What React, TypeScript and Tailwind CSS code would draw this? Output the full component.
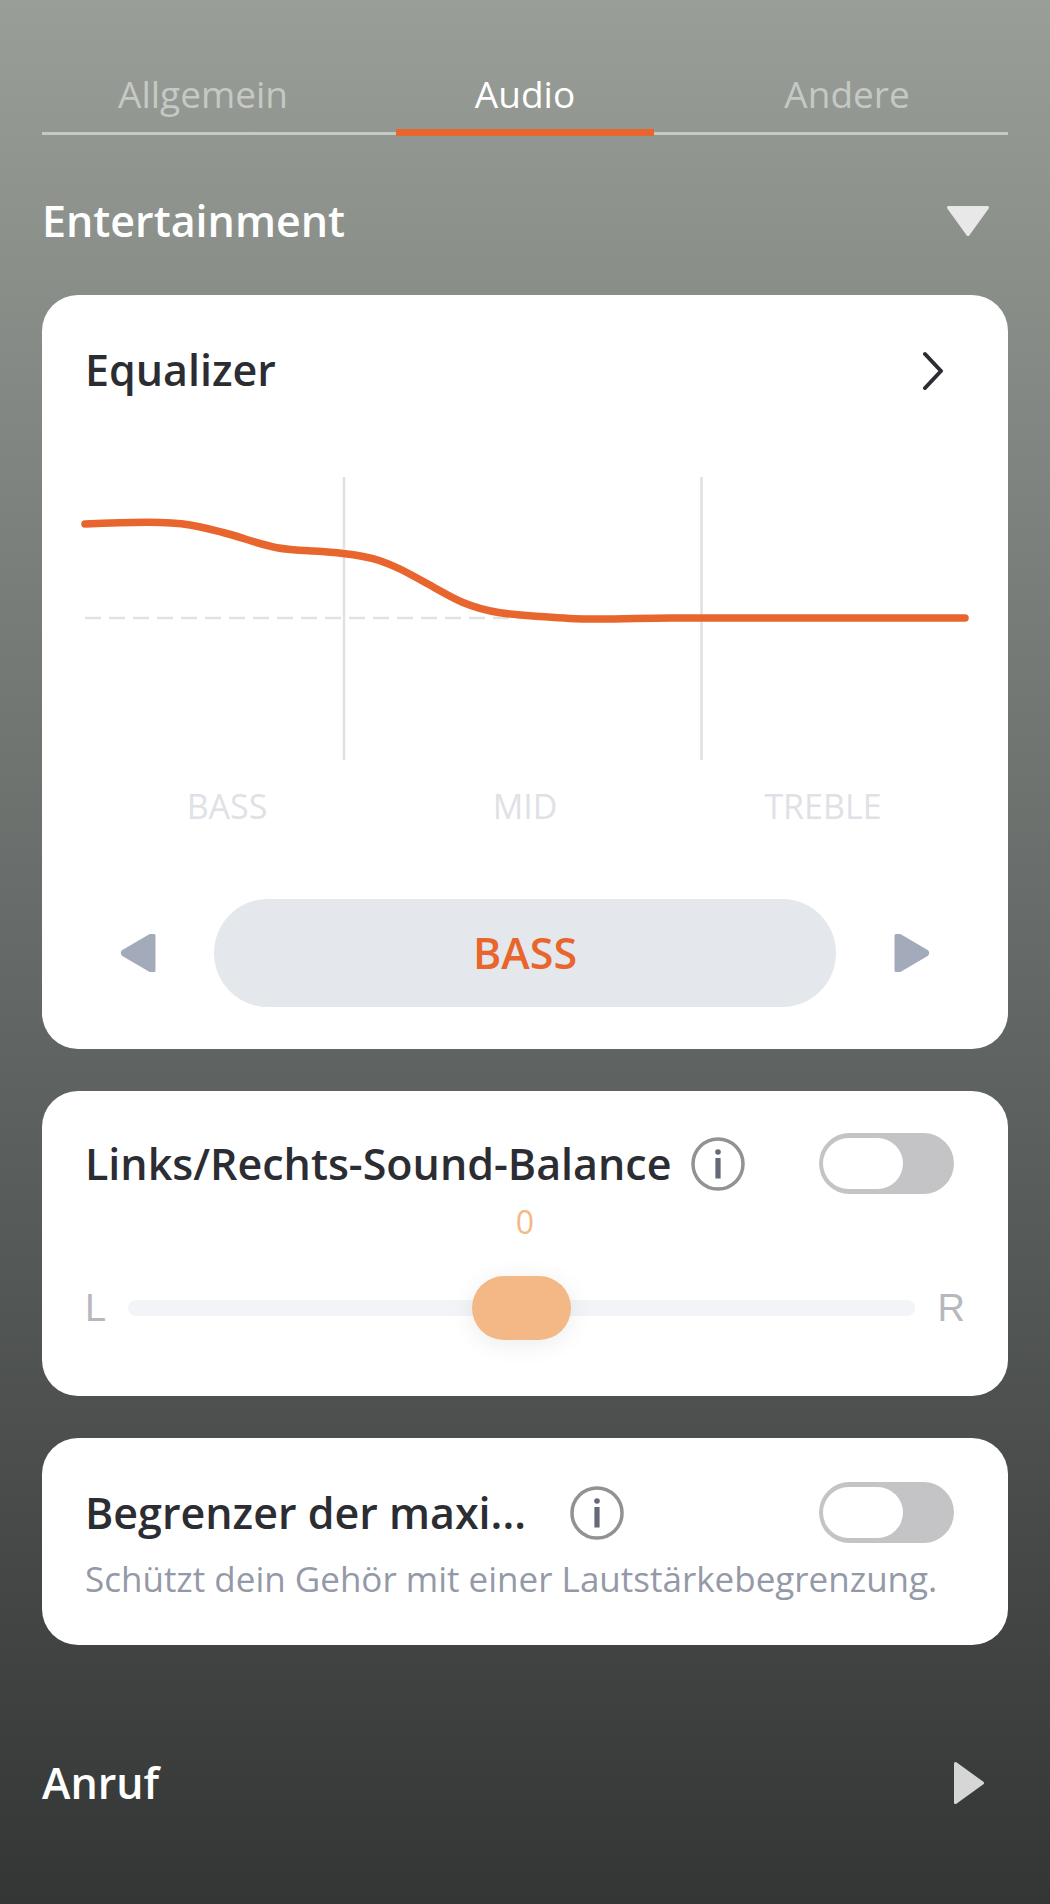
import { ReactNode, useState } from "react";

const tabs = ["Allgemein", "Audio", "Andere"];
const bands = ["BASS", "MID", "TREBLE"];
const presets = ["BASS", "MID", "TREBLE"];

const Triangle = ({ className, d, box }: { className: string; d: string; box: string }) => (
  <svg viewBox={box} className={className} fill="currentColor" stroke="currentColor" strokeWidth="3" strokeLinejoin="round" aria-hidden="true">
    <path d={d} />
  </svg>
);

const Card = ({ className, children }: { className: string; children: ReactNode }) => (
  <section className={`rounded-[36px] bg-white px-[43px] ${className}`}>{children}</section>
);

const InfoButton = ({ label }: { label: string }) => (
  <button type="button" aria-label={label} className="shrink-0">
    <svg viewBox="0 0 54 54" className="size-[54px]" aria-hidden="true">
      <circle cx="27" cy="27" r="25" fill="none" stroke="#929293" strokeWidth="3.5" />
      <circle cx="27" cy="15" r="2.8" fill="#646978" />
      <path d="M24.4 21h5.2v20.500h-5.200z" fill="#646978" />
    </svg>
  </button>
);

const Toggle = ({ id }: { id: string }) => (
  <input
    id={id}
    type="checkbox"
    role="switch"
    className="mr-[11px] ml-auto flex h-[61px] w-[135px] shrink-0 appearance-none items-center rounded-full bg-[#c4c4c6] px-1 before:h-[51px] before:w-20 before:rounded-full before:bg-white checked:justify-end checked:bg-[#e8662d]"
  />
);

const EqualizerChart = () => (
  <svg viewBox="0 0 880 283" className="mt-[77px] w-full overflow-visible" role="img" aria-label="Equalizer">
    <path d="M0 141H880" stroke="#e2e2e5" strokeWidth="2.500" strokeDasharray="16 8" />
    <path d="M259 0V283M616.500 0V283" stroke="#e0e0e5" strokeWidth="2.500" />
    <path
      d="M0 47C22 46 42 45.300 62 45.300C78 45.300 92 45.800 105 48C116 49.800 126 52.500 138 55.500C158 60.500 174 67.500 192 70.700C204 72.800 216 73.300 228 74C240 74.700 248 75.200 258 76.500C272 78 284 80.200 295 83.700C303 86.500 309 89 315 92C325 97 333 101.500 342 106.500C354 113 366 120.500 378 125.500C390 130.500 402 133.800 415 135.700C425 137.200 435 138 445 138.700C464 140 484 142 502 142C532 142.400 558 141 585 141H880"
      fill="none"
      stroke="#e8662d"
      strokeWidth="7.500"
      strokeLinecap="round"
    />
  </svg>
);

export default function App() {
  const [activeTab, setActiveTab] = useState("Audio");
  const [preset, setPreset] = useState(0);
  const [balance, setBalance] = useState(0);

  const step = (by: number) => setPreset((preset + by + presets.length) % presets.length);

  return (
    <main className="min-h-screen bg-linear-to-b from-[#999e98] via-[#656a68] to-[#343635] px-[42px] pt-[66px] font-['Open_Sans',sans-serif] text-[#2b2d33]">
      {/* Tabs */}
      <nav className="grid grid-cols-3 border-b-3 border-[#c5c9c4]">
        {tabs.map((tab) => (
          <button
            key={tab}
            type="button"
            onClick={() => setActiveTab(tab)}
            className={`relative pb-[10px] text-[37px] leading-[56px] ${
              tab === activeTab
                ? "text-white after:absolute after:inset-x-8 after:-bottom-1 after:h-[7px] after:bg-[#e8662d]"
                : "text-[#c5c9c4]"
            }`}
          >
            {tab}
          </button>
        ))}
      </nav>

      <button type="button" className="mt-14 flex w-full items-center justify-between pr-[18px] text-white">
        <span className="text-[43px] leading-[60px] font-semibold">Entertainment</span>
        <Triangle box="0 0 44 32" className="h-8 w-11 text-[#e8e8e8]" d="M2.500 2.500H41.500L22 29.500Z" />
      </button>

      {/* Equalizer */}
      <Card className="mt-11 pt-[45px] pb-[42px]">
        <a href="#equalizer" className="flex items-center justify-between pr-[21px]">
          <h2 className="text-[43px] leading-[60px] font-semibold">Equalizer</h2>
          <svg viewBox="0 0 22 40" className="h-10 w-[22px]" fill="none" stroke="currentColor" strokeWidth="4" strokeLinecap="round" strokeLinejoin="round" aria-hidden="true">
            <path d="M3 4L19 21L3 38" />
          </svg>
        </a>
        <EqualizerChart />
        <div className="-mx-[7px] mt-[22px] grid grid-cols-3 text-center text-[34px] leading-[48px] text-[#dfe1e6]">
          {bands.map((band) => (
            <span key={band}>{band}</span>
          ))}
        </div>
        <div className="mt-[69px] flex items-center justify-between px-[35px] text-[#a3aaba]">
          <button type="button" aria-label="Zurück" onClick={() => step(-1)}>
            <Triangle box="0 0 36 40" className="h-10 w-9" d="M34 2.500L30 2.500L3.500 18Q1 20 3.500 22L30 37.500L34 37.500Z" />
          </button>
          <output className="mx-[58px] flex-1 rounded-full bg-[#e4e7ec] py-6 text-center text-[43px] leading-[60px] font-semibold text-[#e8662d]">
            {presets[preset]}
          </output>
          <button type="button" aria-label="Weiter" onClick={() => step(1)}>
            <Triangle box="0 0 36 40" className="h-10 w-9" d="M2 2.500L6 2.500L32.500 18Q35 20 32.500 22L6 37.500L2 37.500Z" />
          </button>
        </div>
      </Card>

      {/* Balance */}
      <Card className="mt-[42px] pt-[42px] pb-14">
        <div className="flex items-center">
          <label htmlFor="balance-on" className="mr-5 text-[43px] leading-[60px] font-semibold">
            Links/Rechts-Sound-Balance
          </label>
          <InfoButton label="Info zur Balance" />
          <Toggle id="balance-on" />
        </div>
        <p className="mt-2 text-center text-[32px] leading-10 text-[#f3b885]">{balance}</p>
        <div className="mt-[34px] flex items-center font-['Liberation_Sans',sans-serif] text-[38px] leading-[60px] text-[#b7b8be]">
          <span className="w-[43px]">L</span>
          <input
            type="range"
            aria-label="Balance"
            min={-10}
            max={10}
            value={balance}
            onChange={(e) => setBalance(Number(e.target.value))}
            className="h-16 min-w-0 flex-1 appearance-none bg-transparent [&::-webkit-slider-runnable-track]:h-4 [&::-webkit-slider-runnable-track]:rounded-full [&::-webkit-slider-runnable-track]:bg-[#f3f4f7] [&::-webkit-slider-thumb]:-mt-6 [&::-webkit-slider-thumb]:h-16 [&::-webkit-slider-thumb]:w-[99px] [&::-webkit-slider-thumb]:appearance-none [&::-webkit-slider-thumb]:rounded-full [&::-webkit-slider-thumb]:bg-[#f3b885] [&::-webkit-slider-thumb]:shadow-[0_4px_24px_rgba(0,0,0,0.08)]"
          />
          <span className="w-[50px] text-right">R</span>
        </div>
      </Card>

      {/* Volume limit */}
      <Card className="mt-[42px] pt-11 pb-[42px]">
        <div className="flex items-center">
          <label htmlFor="limit-on" className="mr-11 text-[43px] leading-[60px] font-semibold">
            Begrenzer der maxi...
          </label>
          <InfoButton label="Info zum Begrenzer" />
          <Toggle id="limit-on" />
        </div>
        <p className="mt-3 text-[35px] leading-[48px] text-[#9499a7]">
          Schützt dein Gehör mit einer Lautstärkebegrenzung.
        </p>
      </Card>

      <button type="button" className="mt-[108px] flex w-full items-center justify-between pr-[23px] text-white">
        <span className="text-[43px] leading-[60px] font-semibold">Anruf</span>
        <Triangle box="0 0 32 44" className="h-11 w-8 text-[#d6d6d6]" d="M2.500 2.500L29.500 22L2.500 41.500Z" />
      </button>
    </main>
  );
}
